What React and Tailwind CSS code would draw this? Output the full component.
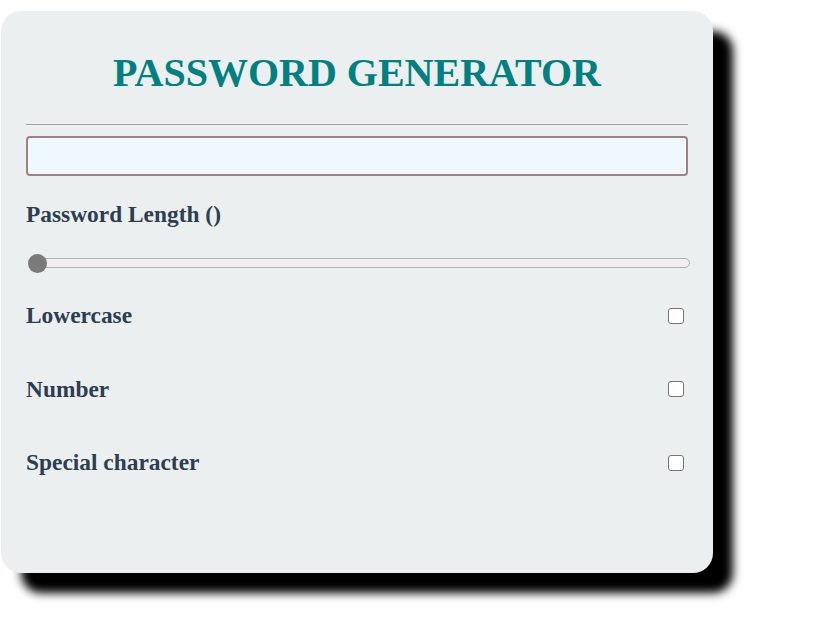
export default function App() {
  const options = ['Lowercase', 'Number', 'Special character']

  return (
    <div className="w-[816px] h-[632px] bg-white pt-[11px] pl-px" style={{ fontFamily: '"Liberation Serif", "Times New Roman", serif' }}>
      <div className="w-[712px] h-[562px] bg-[#ebeff0] rounded-[20px] shadow-[20px_20px_10px_#000] px-[25px] pt-[39px]">
        <h1 className="text-center text-[40px] leading-[46px] font-bold text-[#008080]">PASSWORD GENERATOR</h1>
        <div className="mt-[28px] h-px bg-[#a6a0a0]"></div>
        <div className="mt-[11px] h-10 bg-[#f0f8ff] border-2 border-[#a08080] rounded"></div>
        <div className="mt-[25px] text-[23.4px] leading-[27px] font-bold text-[#2c3e50]">Password Length ()</div>
        <div className="relative mt-[26px] h-[18px] flex items-center">
          <div className="ml-[4px] w-[660px] shrink-0 h-[10px] bg-[#efefef] border border-[#b0b0b0] rounded-full"></div>
          <div className="absolute left-[2px] top-0 w-[19px] h-[19px] rounded-full bg-[#7a7a7a]"></div>
        </div>
        <div className="mt-[30px] flex flex-col gap-[46.5px]">
          {options.map((label) => (
            <div key={label} className="flex items-center justify-between h-[27px]">
              <span className="text-[23.4px] leading-[27px] font-bold text-[#2c3e50]">{label}</span>
              <span className="mr-[4px] w-4 h-4 bg-white border border-[#767676] rounded-[3px]"></span>
            </div>
          ))}
        </div>
      </div>
    </div>
  )
}
